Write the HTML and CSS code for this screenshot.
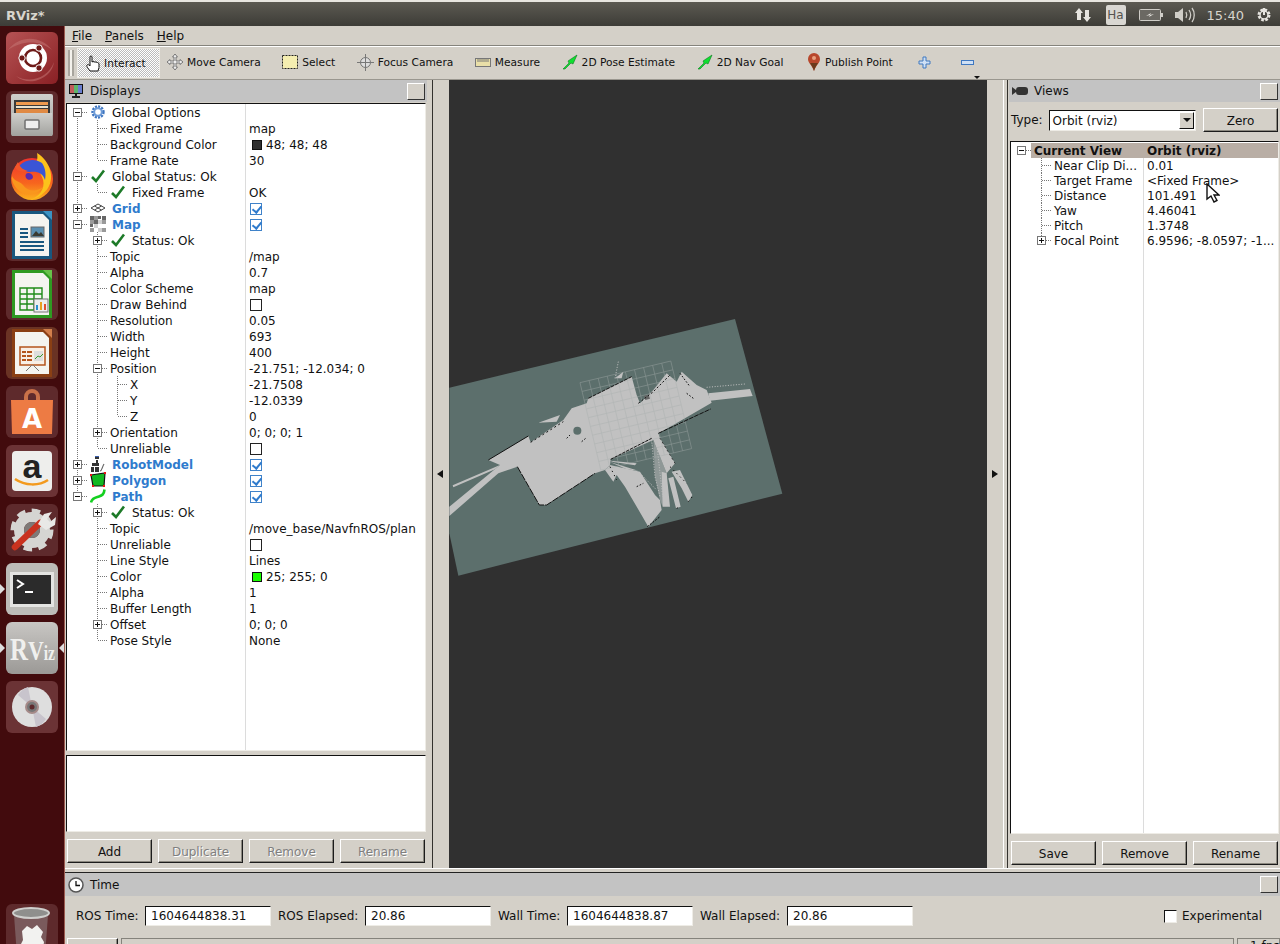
FILE: index.html
```html
<!DOCTYPE html>
<html lang="en">
<head>
    <meta charset="UTF-8">
    <title>RViz*</title>
    <link rel="stylesheet" href="styles.css">
</head>
<body>

<svg class="sprite" width="0" height="0">
    <symbol id="i-check" viewBox="0 0 14 14"><path d="M1 8l4 4L13 1.500" fill="none" stroke="#1d7a28" stroke-width="2.600"/></symbol>
    <symbol id="i-gear" viewBox="0 0 14 14"><circle cx="7" cy="7" r="5.200" fill="none" stroke="#3f76c0" stroke-width="3" stroke-dasharray="2 1"/><circle cx="7" cy="7" r="3.800" fill="none" stroke="#6f9cd8" stroke-width="2"/><circle cx="7" cy="7" r="1.800" fill="#fff"/></symbol>
    <symbol id="i-grid" viewBox="0 0 14 14"><path d="M0 7l7-4 7 4-7 4zM3.500 5l7 4M10.500 5l-7 4" fill="none" stroke="#444" stroke-width="1"/></symbol>
    <symbol id="i-map" viewBox="0 0 16 16"><path fill="#666" d="M0 0h4v4H0zM8 0h3v3H8zM12 0h4v4h-4zM0 8h3v3H0zM4 4h4v4H4z"/><path fill="#999" d="M4 0h4v4H4zM0 4h4v4H0zM12 4h4v4h-4zM0 12h4v4H0zM12 12h4v4h-4z"/><path fill="#d0d0d0" d="M8 4h4v4H8zM4 8h4v4H4zM8 12h4v4H8z"/></symbol>
    <symbol id="i-robot" viewBox="0 0 16 16"><path fill="#333" d="M5 1h4v2H5zM6 4h2v3H6zM2 7h7v3H2zM1 11h3v5H1zM5 11h4v5H5z"/><path fill="#3a5fb0" d="M5 0h4v1H5z"/><path d="M10 15c2 0 2-4 4-7" fill="none" stroke="#666" stroke-width="1.200"/></symbol>
    <symbol id="i-poly" viewBox="0 0 16 16"><path d="M1 3l14-2-1 13-11 0z" fill="#12b821" stroke="#111" stroke-width="1.200"/><path fill="#e11" d="M0 2h2v2H0zM14 0h2v2h-2zM13 13h2v2h-2zM2 13h2v2H2z"/></symbol>
    <symbol id="i-path" viewBox="0 0 16 16"><path d="M1 14.500c1-5 5-5 8-6s5-2 5.500-7" fill="none" stroke="#14d020" stroke-width="2.600"/></symbol>
    <symbol id="i-arrow" viewBox="0 0 16 16"><path d="M1 15l6-6-1-2 9-6-4 9-2-1-6 6z" fill="#10e030" stroke="#0a7a20" stroke-width=".6"/></symbol>
</svg>

<div class="topbar">
    <span class="win-title">RViz*</span>
    <div class="indicators">
        <svg width="17" height="16" viewBox="0 0 17 16"><path d="M4 1l4 5H6v7H2V6H0zM12 15l-4-5h2V3h4v7h2z" fill="#e6e4df"/></svg>
        <span class="kbd">Ha</span>
        <svg width="24" height="12" viewBox="0 0 24 12"><rect x=".5" y=".5" width="21" height="11" rx="1" fill="#6b6963" stroke="#cfcdc7"/><path d="M22 4h2v4h-2z" fill="#cfcdc7"/><path d="M7 7l5-3-1 2 4-1-5 3 1-2z" fill="#e6e4df"/></svg>
        <svg width="20" height="16" viewBox="0 0 20 16"><path d="M0 5h3l5-4v14l-5-4H0z" fill="#cfcdc7"/><path d="M11 5c1 2 1 4 0 6M14 3c2 3 2 7 0 10M17 1c3 4 3 10 0 14" fill="none" stroke="#cfcdc7" stroke-width="1.300"/></svg>
        <span class="clock">15:40</span>
        <svg width="16" height="16" viewBox="0 0 16 16"><circle cx="8" cy="8" r="5" fill="none" stroke="#e6e4df" stroke-width="3" stroke-dasharray="2.500 1.400"/><circle cx="8" cy="8" r="4" fill="none" stroke="#e6e4df" stroke-width="1.400"/><path d="M8 1v7" stroke="#e6e4df" stroke-width="2"/></svg>
    </div>
</div>

<div class="desktop">
    <div class="launcher">
        <div class="tile">
            <svg viewBox="0 0 52 52"><defs><linearGradient id="ub" x1="0" y1="0" x2="1" y2="1"><stop offset="0" stop-color="#b65354"/><stop offset="1" stop-color="#8a2024"/></linearGradient></defs><rect width="52" height="52" rx="6" fill="url(#ub)"/><path d="M2 18C14 2 36 4 46 18 34 8 16 8 2 18zM10 44c14 8 32 2 38-14-2 16-24 26-38 14z" fill="#c77a78" opacity=".5"/><circle cx="27" cy="26" r="14" fill="#fff"/><circle cx="27" cy="26" r="8" fill="none" stroke="#6e1a18" stroke-width="2.600"/><circle cx="16" cy="26" r="3.200" fill="#6e1a18" stroke="#fff"/><circle cx="33" cy="16" r="3.200" fill="#6e1a18" stroke="#fff"/><circle cx="33" cy="36" r="3.200" fill="#6e1a18" stroke="#fff"/></svg>
        </div>
        <div class="tile">
            <svg viewBox="0 0 52 52"><defs><linearGradient id="fl" x1="0" y1="0" x2="0" y2="1"><stop offset="0" stop-color="#cfcfcc"/><stop offset="1" stop-color="#a2a29e"/></linearGradient></defs><rect width="52" height="52" rx="6" fill="#5e2a2c"/><rect x="5" y="3" width="42" height="42" rx="2" fill="url(#fl)"/><rect x="8" y="9" width="36" height="13" fill="#3a3a3a"/><rect x="10" y="11" width="32" height="3" fill="#ef9a4e"/><rect x="10" y="15" width="32" height="2" fill="#e9e3d0"/><rect x="10" y="18" width="32" height="4" fill="#e08a44"/><rect x="6" y="22" width="40" height="23" fill="url(#fl)"/><rect x="19" y="29" width="14" height="9" rx="1" fill="#eee" stroke="#707070" stroke-width="1.500"/></svg>
        </div>
        <div class="tile">
            <svg viewBox="0 0 52 52"><defs><linearGradient id="ff" x1="0" y1="0" x2="0" y2="1"><stop offset="0" stop-color="#f0322e"/><stop offset=".6" stop-color="#f7651e"/><stop offset="1" stop-color="#fcb31d"/></linearGradient></defs><rect width="52" height="52" rx="6" fill="#5e2a2c"/><circle cx="26" cy="29" r="21" fill="url(#ff)"/><path d="M31 3c13 8 18 24 11 35-4 6-10 10-16 11 10-4 14-14 10-22-2-5-5-8-8-12 3-2 4-7 3-12z" fill="#fcc21b"/><path d="M13 16c6-7 16-8 23-3 4 6 4 12 3 17-2-7-8-9-15-8-4 0-7-2-11-6z" fill="#3a55d6"/><path d="M22 23c3 0 5 2 5 4s-3 4-6 2c-3-3-1-6 1-6z" fill="#5a2bb0"/><path d="M6 26c3 6 8 5 11 9 5 7 14 7 20 2-4 7-16 10-22 5-6-4-10-10-9-16z" fill="#f9971d"/><path d="M12 12c2 6 6 8 10 9-5 1-11 1-13-4z" fill="#f2562a"/></svg>
        </div>
        <div class="tile">
            <svg viewBox="0 0 52 52"><rect width="52" height="52" rx="6" fill="#5e2a2c"/><path d="M6 2h32l8 8v40H6z" fill="#18577f"/><path d="M9 5h28l6 6v36H9z" fill="#f4f4f0"/><path d="M37 2h9v9z" fill="#3b93c4"/><path fill="#18577f" d="M14 19h8v2h-8zM14 23h8v2h-8zM14 27h8v2h-8zM14 32h24v2H14zM14 36h24v2H14zM14 40h24v2H14z"/><rect x="25" y="18" width="13" height="10" fill="#5a8fb0" stroke="#666"/><path d="M26 27l4-5 3 3 2-2 3 4z" fill="#3a3a30"/></svg>
        </div>
        <div class="tile">
            <svg viewBox="0 0 52 52"><rect width="52" height="52" rx="6" fill="#5e2a2c"/><path d="M6 2h32l8 8v40H6z" fill="#2f9a22"/><path d="M9 5h28l6 6v36H9z" fill="#f4f4f0"/><path d="M37 2h9v9z" fill="#68c24a"/><path d="M14 20h22v22H14zM14 26h22M14 31h22M14 36h22M21 20v22M28 20v22" fill="none" stroke="#1f8a18" stroke-width="1.400"/><rect x="28" y="31" width="14" height="13" fill="#eee" stroke="#777"/><path d="M30 42v-5h2v5z" fill="#2a8fd0"/><path d="M34 42v-8h2v8z" fill="#e8a020"/><path d="M38 42v-6h2v6z" fill="#e25030"/></svg>
        </div>
        <div class="tile">
            <svg viewBox="0 0 52 52"><rect width="52" height="52" rx="6" fill="#6a3324"/><path d="M6 2h32l8 8v40H6z" fill="#8a3f14"/><path d="M9 5h28l6 6v36H9z" fill="#f4f4f0"/><path d="M37 2h9v9z" fill="#d27f4c"/><rect x="14" y="20" width="25" height="18" fill="#f8efe6" stroke="#b4541c" stroke-width="1.500"/><path fill="#b4541c" d="M16 24h4v2h-4zM16 28h4v2h-4zM16 32h4v2h-4zM21 24h5v2h-5zM21 28h5v2h-5zM21 32h5v2h-5z"/><rect x="28" y="24" width="9" height="10" fill="#ddd"/><path d="M29 32l3-3 2 1 3-3" fill="none" stroke="#3a9a30"/><path d="M26 38l-6 6M27 38l6 6" stroke="#777"/></svg>
        </div>
        <div class="tile">
            <svg viewBox="0 0 52 52"><rect width="52" height="52" rx="6" fill="#5e2a2c"/><path d="M20 16v-5a6 6 0 0 1 12 0v5" fill="none" stroke="#c97149" stroke-width="4"/><path d="M5 14h42l-1 34H6z" fill="#ed7b44"/><text x="26" y="42" class="bag-a">A</text></svg>
        </div>
        <div class="tile">
            <svg viewBox="0 0 52 52"><rect width="52" height="52" rx="6" fill="#6b3335"/><rect x="6" y="6" width="40" height="40" rx="4" fill="#eeeeec"/><text x="26" y="33" class="amazon-a">a</text><path d="M9 34c10 7 24 7 33 1" fill="none" stroke="#f39a1e" stroke-width="2.500"/></svg>
        </div>
        <div class="tile">
            <svg viewBox="0 0 52 52"><rect width="52" height="52" rx="6" fill="#5e2a2c"/><circle cx="26" cy="26" r="18" fill="none" stroke="#d5d5d2" stroke-width="7" stroke-dasharray="8 6"/><circle cx="26" cy="26" r="13" fill="none" stroke="#d5d5d2" stroke-width="10"/><circle cx="26" cy="26" r="8" fill="#7e7a78"/><path d="M9 43L34 19" stroke="#c9321f" stroke-width="6.500" stroke-linecap="round"/><path d="M32 20l6-10 8-2-5 7 3 3 6-5-1 8-9 5z" fill="#e8e8e6"/></svg>
        </div>
        <div class="tile pip-left">
            <svg viewBox="0 0 52 52"><rect width="52" height="52" rx="6" fill="#bdbcb8"/><rect x="4" y="9" width="44" height="35" fill="#e4e4e2"/><rect x="7" y="12" width="38" height="29" fill="#2b2b2b"/><path d="M11 17l6 4-6 4" fill="none" stroke="#fff" stroke-width="2"/><path d="M19 28h8v2h-8z" fill="#fff"/></svg>
        </div>
        <div class="tile pip-left pip-right">
            <svg viewBox="0 0 52 52"><defs><linearGradient id="rv" x1="0" y1="0" x2="0" y2="1"><stop offset="0" stop-color="#c8c6c3"/><stop offset="1" stop-color="#9b9996"/></linearGradient></defs><rect width="52" height="52" rx="6" fill="url(#rv)"/><text x="4" y="38" class="rviz-logo" textLength="45" lengthAdjust="spacingAndGlyphs"><tspan class="rviz-r">R</tspan><tspan class="rviz-v">V</tspan><tspan class="rviz-iz">iz</tspan></text></svg>
        </div>
        <div class="tile">
            <svg viewBox="0 0 52 52"><rect width="52" height="52" rx="6" fill="#6b3335"/><circle cx="26" cy="26" r="20" fill="#dedede"/><path d="M26 26L12 14a20 20 0 0 1 10-8zM26 26l14 12a20 20 0 0 1-10 8z" fill="#c8c4cc"/><circle cx="26" cy="26" r="7" fill="#a58a88"/><circle cx="26" cy="26" r="5" fill="#777"/><circle cx="26" cy="26" r="2.500" fill="#5e2a2c"/></svg>
        </div>
        <div class="tile tile-trash">
            <svg viewBox="0 0 52 52"><rect width="52" height="52" rx="6" fill="#5e2a2c"/><path d="M8 11l3 41h28l3-41z" fill="#7a5a5c"/><ellipse cx="25" cy="9" rx="18" ry="5" fill="#8f8f8d" stroke="#cfcfcd" stroke-width="2"/><path d="M16 27l5-5 5 3 5-4 6 7-2 5 3 5-2 14H16l-2-10 3-6z" fill="#f2f2f0"/></svg>
        </div>
    </div>

    <div class="app">
        <div class="menubar">
            <span class="menu"><u>F</u>ile</span>
            <span class="menu"><u>P</u>anels</span>
            <span class="menu"><u>H</u>elp</span>
        </div>

        <div class="toolbar">
            <span class="grip"></span>
            <div class="tool tool-on">
                <svg width="17" height="17" viewBox="0 0 17 17"><path d="M5 16c-2-3-4-5-3-6s2 0 3 1V2a1 1 0 0 1 2 0v5l1-.5 1.500.5 1.500 0 1.500.5 1.500 1v4l-1 3.500z" fill="#fff" stroke="#111"/></svg>
                Interact
            </div>
            <div class="tools">
                <div class="tool">
                    <svg width="16" height="16" viewBox="0 0 16 16"><path d="M8 0l2.500 3H9v4h4V5.500L16 8l-3 2.500V9H9v4h1.500L8 16l-2.500-3H7V9H3v1.500L0 8l3-2.500V7h4V3H5.500z" fill="#eee" stroke="#777"/></svg>
                    Move Camera
                </div>
                <div class="tool">
                    <svg width="16" height="14" viewBox="0 0 16 14"><rect x=".5" y=".5" width="15" height="13" fill="#f5eeb0" stroke="#222" stroke-dasharray="2 1"/></svg>
                    Select
                </div>
                <div class="tool">
                    <svg width="17" height="17" viewBox="0 0 17 17"><circle cx="8.500" cy="8.500" r="5" fill="#ddd" stroke="#777"/><path d="M8.500 0v17M0 8.500h17" stroke="#777"/></svg>
                    Focus Camera
                </div>
                <div class="tool">
                    <svg width="16" height="9" viewBox="0 0 16 9"><rect x=".5" y=".5" width="15" height="8" fill="#e9dfa8" stroke="#777"/><path d="M3 1v3M5 1v3M7 1v3M9 1v3M11 1v3M13 1v3" stroke="#777"/></svg>
                    Measure
                </div>
                <div class="tool">
                    <svg width="16" height="16"><use href="#i-arrow"/></svg>
                    2D Pose Estimate
                </div>
                <div class="tool">
                    <svg width="16" height="16"><use href="#i-arrow"/></svg>
                    2D Nav Goal
                </div>
                <div class="tool tool-pin">
                    <svg width="14" height="18" viewBox="0 0 14 18"><path d="M7 18C5 12 1 10 1 6a6 6 0 0 1 12 0c0 4-4 6-6 12z" fill="#b8472c"/><path d="M7 18C6 14 4 12 3 10h8c-1 2-3 4-4 8z" fill="#6a3a1c"/><circle cx="7" cy="5" r="2" fill="#e8a080"/></svg>
                    Publish Point
                </div>
                <div class="tool tool-plus">
                    <svg width="13" height="13" viewBox="0 0 13 13"><path d="M5 1h3v4h4v3H8v4H5V8H1V5h4z" fill="#cfe0f5" stroke="#3f78c0"/></svg>
                </div>
                <div class="tool tool-minus">
                    <svg width="13" height="5" viewBox="0 0 13 5"><rect x=".5" y=".5" width="12" height="4" fill="#cfe0f5" stroke="#3f78c0"/></svg>
                </div>
                <span class="more"></span>
            </div>
        </div>

        <div class="main">
            <div class="dock dock-left">
                <div class="dock-title">
                    <svg width="16" height="16" viewBox="0 0 16 16"><rect x="1" y="1" width="14" height="10" fill="#111"/><path fill="#c05a5a" d="M2 2h4v8H2z"/><path fill="#5fb56a" d="M6 2h4v8H6z"/><path fill="#6a7ed0" d="M10 2h4v8h-4z"/><path fill="#222" d="M7 11h2v2H7zM4 13h8v2H4z"/></svg>
                    <span>Displays</span>
                    <span class="float-btn"></span>
                </div>
                <div class="tree tree-displays">
                    <div class="row"><div class="n"><span class="g g-f"><i class="exp"></i></span><svg class="ico"><use href="#i-gear"/></svg><span class="lbl">Global Options</span></div><div class="v"></div></div>
                    <div class="row"><div class="n"><span class="g g-v"></span><span class="g g-t"></span><span class="txt">Fixed Frame</span></div><div class="v">map</div></div>
                    <div class="row"><div class="n"><span class="g g-v"></span><span class="g g-t"></span><span class="txt">Background Color</span></div><div class="v"><i class="swatch swatch-bg"></i>48; 48; 48</div></div>
                    <div class="row"><div class="n"><span class="g g-v"></span><span class="g g-l"></span><span class="txt">Frame Rate</span></div><div class="v">30</div></div>
                    <div class="row"><div class="n"><span class="g g-t"><i class="exp"></i></span><svg class="ico"><use href="#i-check"/></svg><span class="lbl">Global Status: Ok</span></div><div class="v"></div></div>
                    <div class="row"><div class="n"><span class="g g-v"></span><span class="g g-l"></span><svg class="ico"><use href="#i-check"/></svg><span class="lbl">Fixed Frame</span></div><div class="v">OK</div></div>
                    <div class="row"><div class="n"><span class="g g-t"><i class="exp plus"></i></span><svg class="ico"><use href="#i-grid"/></svg><span class="lbl blue">Grid</span></div><div class="v"><i class="cb on"></i></div></div>
                    <div class="row"><div class="n"><span class="g g-t"><i class="exp"></i></span><svg class="ico ico-16"><use href="#i-map"/></svg><span class="lbl blue">Map</span></div><div class="v"><i class="cb on"></i></div></div>
                    <div class="row"><div class="n"><span class="g g-v"></span><span class="g g-t"><i class="exp plus"></i></span><svg class="ico"><use href="#i-check"/></svg><span class="lbl">Status: Ok</span></div><div class="v"></div></div>
                    <div class="row"><div class="n"><span class="g g-v"></span><span class="g g-t"></span><span class="txt">Topic</span></div><div class="v">/map</div></div>
                    <div class="row"><div class="n"><span class="g g-v"></span><span class="g g-t"></span><span class="txt">Alpha</span></div><div class="v">0.7</div></div>
                    <div class="row"><div class="n"><span class="g g-v"></span><span class="g g-t"></span><span class="txt">Color Scheme</span></div><div class="v">map</div></div>
                    <div class="row"><div class="n"><span class="g g-v"></span><span class="g g-t"></span><span class="txt">Draw Behind</span></div><div class="v"><i class="cb"></i></div></div>
                    <div class="row"><div class="n"><span class="g g-v"></span><span class="g g-t"></span><span class="txt">Resolution</span></div><div class="v">0.05</div></div>
                    <div class="row"><div class="n"><span class="g g-v"></span><span class="g g-t"></span><span class="txt">Width</span></div><div class="v">693</div></div>
                    <div class="row"><div class="n"><span class="g g-v"></span><span class="g g-t"></span><span class="txt">Height</span></div><div class="v">400</div></div>
                    <div class="row"><div class="n"><span class="g g-v"></span><span class="g g-t"><i class="exp"></i></span><span class="txt">Position</span></div><div class="v">-21.751; -12.034; 0</div></div>
                    <div class="row"><div class="n"><span class="g g-v"></span><span class="g g-v"></span><span class="g g-t"></span><span class="txt">X</span></div><div class="v">-21.7508</div></div>
                    <div class="row"><div class="n"><span class="g g-v"></span><span class="g g-v"></span><span class="g g-t"></span><span class="txt">Y</span></div><div class="v">-12.0339</div></div>
                    <div class="row"><div class="n"><span class="g g-v"></span><span class="g g-v"></span><span class="g g-l"></span><span class="txt">Z</span></div><div class="v">0</div></div>
                    <div class="row"><div class="n"><span class="g g-v"></span><span class="g g-t"><i class="exp plus"></i></span><span class="txt">Orientation</span></div><div class="v">0; 0; 0; 1</div></div>
                    <div class="row"><div class="n"><span class="g g-v"></span><span class="g g-l"></span><span class="txt">Unreliable</span></div><div class="v"><i class="cb"></i></div></div>
                    <div class="row"><div class="n"><span class="g g-t"><i class="exp plus"></i></span><svg class="ico ico-16"><use href="#i-robot"/></svg><span class="lbl blue">RobotModel</span></div><div class="v"><i class="cb on"></i></div></div>
                    <div class="row"><div class="n"><span class="g g-t"><i class="exp plus"></i></span><svg class="ico ico-16"><use href="#i-poly"/></svg><span class="lbl blue">Polygon</span></div><div class="v"><i class="cb on"></i></div></div>
                    <div class="row"><div class="n"><span class="g g-l"><i class="exp"></i></span><svg class="ico ico-16"><use href="#i-path"/></svg><span class="lbl blue">Path</span></div><div class="v"><i class="cb on"></i></div></div>
                    <div class="row"><div class="n"><span class="g"></span><span class="g g-t"><i class="exp plus"></i></span><svg class="ico"><use href="#i-check"/></svg><span class="lbl">Status: Ok</span></div><div class="v"></div></div>
                    <div class="row"><div class="n"><span class="g"></span><span class="g g-t"></span><span class="txt">Topic</span></div><div class="v">/move_base/NavfnROS/plan</div></div>
                    <div class="row"><div class="n"><span class="g"></span><span class="g g-t"></span><span class="txt">Unreliable</span></div><div class="v"><i class="cb"></i></div></div>
                    <div class="row"><div class="n"><span class="g"></span><span class="g g-t"></span><span class="txt">Line Style</span></div><div class="v">Lines</div></div>
                    <div class="row"><div class="n"><span class="g"></span><span class="g g-t"></span><span class="txt">Color</span></div><div class="v"><i class="swatch swatch-path"></i>25; 255; 0</div></div>
                    <div class="row"><div class="n"><span class="g"></span><span class="g g-t"></span><span class="txt">Alpha</span></div><div class="v">1</div></div>
                    <div class="row"><div class="n"><span class="g"></span><span class="g g-t"></span><span class="txt">Buffer Length</span></div><div class="v">1</div></div>
                    <div class="row"><div class="n"><span class="g"></span><span class="g g-t"><i class="exp plus"></i></span><span class="txt">Offset</span></div><div class="v">0; 0; 0</div></div>
                    <div class="row"><div class="n"><span class="g"></span><span class="g g-l"></span><span class="txt">Pose Style</span></div><div class="v">None</div></div>
                    <div class="row row-fill"><div class="n"></div><div class="v"></div></div>
                </div>
                <div class="description"></div>
                <div class="btn-row btn-row-left">
                    <span class="btn">Add</span>
                    <span class="btn off">Duplicate</span>
                    <span class="btn off">Remove</span>
                    <span class="btn off">Rename</span>
                </div>
            </div>

            <div class="split split-left"><i class="arr arr-l"></i></div>

            <div class="canvas">
                <svg width="538" height="788" viewBox="0 0 538 788">
                    <g transform="translate(-9 230) scale(.33333)">
                        <path d="M28 233L885 27L1027 551L55 797L28 670z" fill="#5c6f6c"/>
                        <!-- free space of the map -->
                        <path d="M28 590L180 465L145 450L265 378L272 397L370 330L395 295L440 280L445 265L575 200L590 255L600 280L640 240L680 190L710 215L725 185L770 225L800 240L815 278L700 345L655 370L660 385L705 460L680 490L640 390L512 448L510 465L495 480L465 490L320 585L298 585L232 470L175 490L28 618z" fill="#c1c1c1"/>
                        <path d="M510 465L600 485L645 555L660 570L665 600L625 650L555 530L530 495L520 515L495 480z" fill="#c1c1c1"/>
                        <path d="M805 250L930 237L938 258L810 272zM38 526L180 465L165 478L40 532zM295 338L360 315L350 335zM525 205L550 185L545 205z" fill="#c1c1c1"/>
                        <path d="M665 485L680 490L690 590L668 590zM695 485L720 480L757 555L745 575L725 535zM685 505L700 500L722 590L708 595zM510 452L590 460L585 466L520 456zM510 456L595 482L560 478z" fill="#c1c1c1"/>
                        <path d="M640 390L680 490L668 590L660 570L645 500z" fill="#c1c1c1" opacity=".5"/>
                        <g fill="none" stroke="#c1c1c1" stroke-width="3" stroke-dasharray="3 5">
                            <path d="M635 390L645 500L660 560M650 400L668 560M800 232L915 222M600 490L650 540M525 205L535 155"/>
                        </g>
                        <g transform="translate(420 218) rotate(-13.400)" fill="none" stroke="#a8aead" stroke-width="2" opacity=".55">
                            <rect width="280" height="270"/>
                            <path d="M28 0v270M56 0v270M84 0v270M112 0v270M140 0v270M168 0v270M196 0v270M224 0v270M252 0v270M0 27h280M0 54h280M0 81h280M0 108h280M0 135h280M0 162h280M0 189h280M0 216h280M0 243h280"/>
                        </g>
                        <circle cx="412" cy="362" r="12" fill="#5c6f6c"/>
                        <path d="M612 258l14-4 4 12-14 4z" fill="#666"/>
                        <!-- walls -->
                        <g fill="none" stroke="#111" stroke-width="3">
                            <path d="M145 450L265 378"/>
                            <path d="M445 265L575 200" stroke-dasharray="12 3"/>
                            <path d="M232 470L298 585L320 585L465 490" stroke-dasharray="22 3"/>
                            <path d="M512 448L635 385" stroke-dasharray="10 3"/>
                            <path d="M655 370L812 297" stroke-dasharray="14 3"/>
                            <path d="M622 650L660 620" stroke-dasharray="6 4"/>
                            <path d="M272 397L370 335" stroke-dasharray="6 8"/>
                            <path d="M595 280L640 245L690 195" stroke-dasharray="6 6"/>
                            <path d="M510 470L530 510M690 470L740 520M710 595L722 590M745 575L757 560M660 385L705 460" stroke-dasharray="4 10"/>
                            <path d="M380 385l10-10M425 395l12-10M720 190l30 40M740 250l20 15M590 530l20-10" stroke-dasharray="5 5"/>
                        </g>
                    </g>
                </svg>
            </div>

            <div class="split split-right"><i class="arr arr-r"></i></div>

            <div class="dock dock-right">
                <div class="dock-title">
                    <svg width="16" height="16" viewBox="0 0 16 16"><path d="M0 4l4 3V9l-4 3z" fill="#333"/><rect x="4" y="4" width="12" height="8" rx="3" fill="#333"/></svg>
                    <span>Views</span>
                    <span class="float-btn"></span>
                </div>
                <div class="type-row">
                    <span>Type:</span>
                    <div class="combo"><span class="combo-text">Orbit (rviz)</span><i class="combo-btn"></i></div>
                    <span class="btn btn-zero">Zero</span>
                </div>
                <div class="tree tree-views">
                    <div class="row row-head"><div class="n"><span class="g g-head"><i class="exp"></i></span><span class="head-a">Current View</span></div><div class="v">Orbit (rviz)</div></div>
                    <div class="row"><div class="n"><span class="g"></span><span class="g g-t"></span><span class="txt">Near Clip Di...</span></div><div class="v">0.01</div></div>
                    <div class="row"><div class="n"><span class="g"></span><span class="g g-t"></span><span class="txt">Target Frame</span></div><div class="v">&lt;Fixed Frame&gt;</div></div>
                    <div class="row"><div class="n"><span class="g"></span><span class="g g-t"></span><span class="txt">Distance</span></div><div class="v">101.491</div></div>
                    <div class="row"><div class="n"><span class="g"></span><span class="g g-t"></span><span class="txt">Yaw</span></div><div class="v">4.46041</div></div>
                    <div class="row"><div class="n"><span class="g"></span><span class="g g-t"></span><span class="txt">Pitch</span></div><div class="v">1.3748</div></div>
                    <div class="row"><div class="n"><span class="g"></span><span class="g g-l"><i class="exp plus"></i></span><span class="txt">Focal Point</span></div><div class="v">6.9596; -8.0597; -1...</div></div>
                    <div class="row row-fill"><div class="n"></div><div class="v"></div></div>
                </div>
                <div class="btn-row btn-row-right">
                    <span class="btn">Save</span>
                    <span class="btn">Remove</span>
                    <span class="btn">Rename</span>
                </div>
            </div>
        </div>

        <div class="time-panel">
            <div class="dock-title">
                <svg width="16" height="16" viewBox="0 0 16 16"><circle cx="8" cy="8" r="7" fill="#fff" stroke="#555" stroke-width="1.500"/><path d="M8 4v4.500h4" fill="none" stroke="#111" stroke-width="1.300"/></svg>
                <span>Time</span>
                <span class="float-btn"></span>
            </div>
            <div class="time-row">
                <label class="lab-s">ROS Time:</label><span class="field">1604644838.31</span>
                <label class="lab-l">ROS Elapsed:</label><span class="field">20.86</span>
                <label class="lab-s">Wall Time:</label><span class="field">1604644838.87</span>
                <label class="lab-l">Wall Elapsed:</label><span class="field">20.86</span>
                <span class="exp-check"><i class="sunken-cb"></i>Experimental</span>
            </div>
            <div class="status-row">
                <span class="btn btn-reset"></span>
                <span class="status-box status-main"></span>
                <span class="status-box status-fps">1 fps</span>
            </div>
        </div>
    </div>
</div>

<svg class="cursor" width="14" height="20" viewBox="0 0 14 20"><path d="M1 1v15l4-3 3 6 3-1.500-3-5.500h5z" fill="#fff" stroke="#111" stroke-width="1.400"/></svg>

</body>
</html>
```

FILE: styles.css
```css
* {
    box-sizing: border-box;
}
html, body {
    height: 100%;
}
body {
    margin: 0;
    width: 1280px;
    height: 944px;
    overflow: hidden;
    display: flex;
    flex-direction: column;
    position: relative;
    font-family: "DejaVu Sans", sans-serif;
    font-size: 12px;
    color: #111;
    background-color: #d4d0c8;
}
.sprite {
    display: none;
}
i {
    font-style: normal;
}

/* ubuntu panel */
.topbar {
    height: 26px;
    flex: none;
    display: flex;
    align-items: center;
    justify-content: space-between;
    padding: 2px 8px 0 6px;
    background: linear-gradient(#5c5a52, #3d3c37);
    border-top: 2px solid #e8e6e0;
}
.win-title {
    color: #d8d5cd;
    font-weight: bold;
    font-size: 13px;
}
.indicators {
    display: flex;
    align-items: center;
    gap: 12px;
}
.kbd {
    width: 20px;
    height: 20px;
    margin: 0 1px 0 2px;
    display: flex;
    align-items: center;
    justify-content: center;
    background-color: #d9d7d2;
    color: #55534e;
    border-radius: 2px;
    font-size: 12px;
}
.clock {
    color: #d8d5cd;
    font-size: 13px;
}

.desktop {
    flex: 1;
    display: flex;
    min-height: 0;
}

/* launcher */
.launcher {
    width: 65px;
    flex: none;
    padding: 6px 0 0 6px;
    display: flex;
    flex-direction: column;
    gap: 7px;
    overflow: hidden;
    background-color: #420b0d;
    border-right: 1px solid #9c5a50;
}
.tile {
    width: 52px;
    height: 52px;
    flex: none;
    position: relative;
}
.tile svg {
    display: block;
    width: 52px;
    height: 52px;
}
.tile-trash {
    margin-top: 164px;
}
.pip-left::before {
    content: "";
    position: absolute;
    left: -6px;
    top: 21px;
    border: 5px solid transparent;
    border-left-color: #ddd;
}
.pip-right::after {
    content: "";
    position: absolute;
    right: -6px;
    top: 21px;
    border: 5px solid transparent;
    border-right-color: #ddd;
}
.bag-a {
    font-family: "DejaVu Sans", sans-serif;
    font-size: 26px;
    font-weight: bold;
    fill: #fff;
    text-anchor: middle;
}
.amazon-a {
    font-family: "Liberation Sans", sans-serif;
    font-size: 34px;
    font-weight: bold;
    fill: #222;
    text-anchor: middle;
}
.rviz-logo {
    font-family: "Liberation Serif", serif;
    font-weight: bold;
    fill: #f0f0ee;
}
.rviz-r {
    font-size: 32px;
}
.rviz-v {
    font-size: 28px;
}
.rviz-iz {
    font-size: 20px;
}

/* main window */
.app {
    flex: 1;
    min-width: 0;
    display: flex;
    flex-direction: column;
}
.menubar {
    height: 20px;
    flex: none;
    display: flex;
    align-items: center;
    gap: 13px;
    padding-left: 7px;
    border-bottom: 1px solid #85837c;
}
.toolbar {
    height: 34px;
    flex: none;
    display: flex;
    align-items: center;
    padding-left: 3px;
    font-size: 10.67px;
    border-top: 1px solid #fff;
    border-bottom: 1px solid #9a978f;
}
.grip {
    width: 6px;
    height: 26px;
    margin-right: 3px;
    border-left: 2px solid #a8a59d;
    border-right: 2px solid #a8a59d;
    background-color: #f4f2ec;
}
.tool {
    display: flex;
    align-items: center;
    gap: 4px;
    white-space: nowrap;
}
.tool-on {
    width: 83px;
    height: 30px;
    padding-left: 7px;
    margin-right: 7px;
    gap: 2px;
    border: 1px solid #eeece6;
    background-color: #d8d5ce;
    background-image: repeating-conic-gradient(#fff 0 25%, #bbb 0 50%);
    background-size: 2px 2px;
}
.tools {
    display: flex;
    align-items: center;
    gap: 21.5px;
    position: relative;
    margin-bottom: 2px;
}
.tool-pin {
    margin-left: 2px;
}
.tool-plus {
    margin-left: 4px;
}
.tool-minus {
    margin-left: 8px;
}
.more {
    position: absolute;
    right: -6px;
    top: 23px;
    border: 3px solid transparent;
    border-top-color: #111;
}

.main {
    flex: 1;
    display: flex;
    min-height: 0;
    height: 788px;
}
.dock {
    display: flex;
    flex-direction: column;
}
.dock-left {
    width: 363px;
    flex: none;
    padding-left: 1px;
}
.dock-right {
    width: 271px;
    flex: none;
}
.dock-title {
    height: 22px;
    flex: none;
    display: flex;
    align-items: center;
    gap: 6px;
    padding-left: 3px;
    background-color: #c3c3c3;
}
.dock-left .dock-title {
    margin-left: -1px;
    margin-right: 1px;
}
.float-btn {
    width: 18px;
    height: 17px;
    margin-left: auto;
    margin-right: 2px;
    background-color: #d4d0c8;
    border: 1px solid;
    border-color: #fff #333 #333 #fff;
}

/* property trees */
.tree {
    display: flex;
    flex-direction: column;
    background-color: #fff;
    border: 1px solid;
    border-color: #111 #eeece6 #eeece6 #111;
}
.tree-displays {
    --mid: 8px;
    width: 360px;
    height: 648px;
    margin-top: 1px;
}
.tree-views {
    --mid: 7px;
    width: 269px;
    height: 693px;
    margin: 0 0 0 1px;
    padding-top: 1px;
}
.row {
    display: flex;
    height: 16px;
    flex: none;
    line-height: 18px;
    white-space: nowrap;
}
.tree-views .row {
    height: 15px;
    line-height: 17px;
}
.tree .row-fill {
    flex: 1;
}
.n {
    width: 178px;
    flex: none;
    display: flex;
    overflow: hidden;
}
.tree-views .n {
    width: 132px;
}
.v {
    flex: 1;
    padding: 2px 0 0 3px;
    border-left: 1px solid #dcdcdc;
    display: flex;
    align-items: center;
}
.g {
    width: 20px;
    height: 100%;
    flex: none;
    background-repeat: no-repeat;
}
.g-v {
    background-image: repeating-linear-gradient(#777 0 1px, transparent 1px 2px);
    background-size: 1px 100%;
    background-position: 10px 0;
}
.g-t {
    background-image: repeating-linear-gradient(#777 0 1px, transparent 1px 2px), repeating-linear-gradient(90deg, #777 0 1px, transparent 1px 2px);
    background-size: 1px 100%, 9px 1px;
    background-position: 10px 0, 11px var(--mid);
}
.g-l {
    background-image: repeating-linear-gradient(#777 0 1px, transparent 1px 2px), repeating-linear-gradient(90deg, #777 0 1px, transparent 1px 2px);
    background-size: 1px 8px, 9px 1px;
    background-position: 10px 0, 11px var(--mid);
}
.g-f {
    background-image: repeating-linear-gradient(#777 0 1px, transparent 1px 2px), repeating-linear-gradient(90deg, #777 0 1px, transparent 1px 2px);
    background-size: 1px 8px, 9px 1px;
    background-position: 10px 8px, 11px var(--mid);
}
.g-head {
    background-image: repeating-linear-gradient(90deg, #777 0 1px, transparent 1px 2px);
    background-size: 9px 1px;
    background-position: 11px var(--mid);
}
.exp {
    display: block;
    position: relative;
    width: 9px;
    height: 9px;
    margin: calc(var(--mid) - 4px) 0 0 6px;
    background-color: #fff;
    border: 1px solid #777;
}
.exp::before {
    content: "";
    position: absolute;
    left: 1px;
    top: 3px;
    width: 5px;
    height: 1px;
    background-color: #111;
}
.exp.plus::after {
    content: "";
    position: absolute;
    left: 3px;
    top: 1px;
    width: 1px;
    height: 5px;
    background-color: #111;
}
.txt {
    padding-left: 3px;
}
.ico {
    width: 14px;
    height: 14px;
    flex: none;
    margin: 1px 7px 0 4px;
}
.ico-16 {
    width: 16px;
    height: 16px;
    margin: 0 6px 0 3px;
}
.blue {
    color: #2f7bcd;
    font-weight: bold;
}
.row-head {
    font-weight: bold;
}
.row-head .head-a {
    flex: 1;
    padding-left: 3px;
    background-color: #b9aea5;
}
.row-head .v {
    background-color: #b9aea5;
    border-left-color: #b9aea5;
}
.cb {
    position: relative;
    width: 12px;
    height: 12px;
    margin: -1px 0 0 1px;
    background-color: #fff;
    border: 1px solid #222;
}
.cb.on {
    border-color: #3f82c9;
}
.cb.on::after {
    content: "";
    position: absolute;
    left: 3px;
    top: 0;
    width: 4px;
    height: 7px;
    border: solid #2f7bcd;
    border-width: 0 2px 2px 0;
    transform: rotate(40deg);
}
.swatch {
    width: 10px;
    height: 10px;
    margin: 0 4px 0 3px;
    border: 1px solid #111;
}
.swatch-bg {
    background-color: #303030;
}
.swatch-path {
    background-color: #19ff00;
}

.description {
    width: 360px;
    height: 77px;
    margin-top: 4px;
    flex: none;
    background-color: #fff;
    border: 1px solid;
    border-color: #111 #eeece6 #eeece6 #111;
}
.btn-row {
    display: flex;
    gap: 6px;
}
.btn-row-left {
    margin: 7px 0 0 1px;
}
.btn-row-right {
    margin: 7px 0 0 2px;
}
.btn {
    width: 85px;
    height: 24px;
    flex: none;
    padding-top: 1px;
    display: flex;
    align-items: center;
    justify-content: center;
    background-color: #d4d0c8;
    border: 1px solid;
    border-color: #fff #1c1c1c #1c1c1c #fff;
    box-shadow: inset -1px -1px 0 #8c8980;
}
.btn.off {
    color: #7f7f7f;
    text-shadow: 1px 1px 0 #fff;
}

/* splitters around the 3d view */
.split {
    flex: none;
    display: flex;
    align-items: center;
}
.split-left {
    width: 21px;
    padding-left: 9px;
    background: linear-gradient(#33312d, #33312d) 4px 0 / 1px 100% no-repeat;
}
.split-right {
    width: 22px;
    padding-left: 5px;
    background: linear-gradient(#33312d, #33312d) 20px 0 / 1px 100% no-repeat, linear-gradient(#fff, #fff) 16px 0 / 1px 100% no-repeat;
}
.arr {
    border: 4px solid transparent;
    height: 0;
}
.arr-l {
    border-left-width: 0;
    border-right: 6px solid #111;
}
.arr-r {
    border-right-width: 0;
    border-left: 6px solid #111;
}
.canvas {
    width: 538px;
    flex: none;
    overflow: hidden;
    background-color: #303030;
}
.canvas svg {
    display: block;
}

.type-row {
    height: 39px;
    flex: none;
    display: flex;
    align-items: center;
    padding: 0 2px 3px;
    gap: 6px;
}
.combo {
    width: 148px;
    height: 21px;
    display: flex;
    align-items: center;
    justify-content: space-between;
    padding: 0 1px 0 3px;
    background-color: #fff;
    border: 1px solid;
    border-color: #111 #eeece6 #eeece6 #111;
}
.combo-text {
    padding-top: 2px;
}
.combo-btn {
    width: 15px;
    height: 17px;
    display: flex;
    align-items: center;
    justify-content: center;
    background-color: #d4d0c8;
    border: 1px solid;
    border-color: #fff #111 #111 #fff;
}
.combo-btn::after {
    content: "";
    border: 4px solid transparent;
    border-top-color: #111;
    border-bottom-width: 0;
}
.btn-zero {
    width: 75px;
    margin-left: 1px;
}

/* time panel */
.time-panel {
    flex: none;
    height: 76px;
    padding-top: 3px;
    border-top: 1px solid #fff;
    overflow: hidden;
}
.time-panel .dock-title {
    height: 24px;
    border-top: 1px solid #222;
}
.time-row {
    display: flex;
    align-items: center;
    padding: 10px 0 0 11px;
    height: 30px;
}
.lab-s {
    width: 69px;
    flex: none;
}
.lab-l {
    width: 87px;
    flex: none;
}
.field {
    width: 126px;
    height: 20px;
    flex: none;
    margin-right: 7px;
    padding-left: 5px;
    line-height: 18px;
    background-color: #fff;
    border: 1px solid;
    border-color: #111 #eeece6 #eeece6 #111;
}
.exp-check {
    margin-left: auto;
    padding-right: 18px;
    display: flex;
    align-items: center;
    gap: 5px;
}
.sunken-cb {
    width: 13px;
    height: 13px;
    background-color: #fff;
    border: 1px solid;
    border-color: #111 #eeece6 #eeece6 #111;
}
.status-row {
    display: flex;
    gap: 3px;
    padding: 12px 0 0 2px;
}
.btn-reset {
    width: 51px;
    height: 22px;
}
.status-box {
    height: 22px;
    border: 1px solid #85837c;
    border-bottom: 0;
    padding: 0 0 0 12px;
}
.status-main {
    width: 1113px;
}
.status-fps {
    flex: 1;
    white-space: nowrap;
    overflow: hidden;
}

.cursor {
    position: absolute;
    left: 1206px;
    top: 183px;
}
```
